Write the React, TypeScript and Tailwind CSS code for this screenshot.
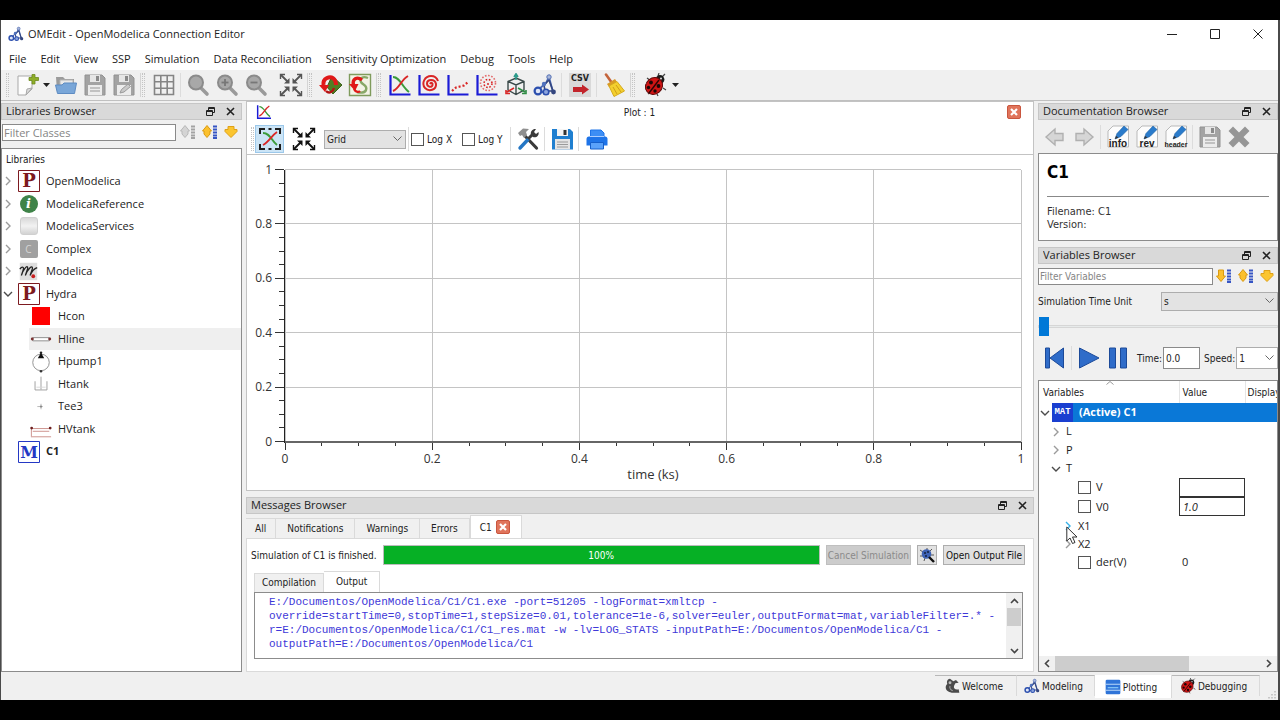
import type { ReactNode } from 'react'

type IconProps = { size?: number }

function Svg({ size = 24, box = 24, children }: { size?: number; box?: number; children: ReactNode }) {
  return (
    <svg width={size} height={size} viewBox={`0 0 ${box} ${box}`} fill="none" className="shrink-0" aria-hidden="true">
      {children}
    </svg>
  )
}

const LogoIcon = ({ size = 24 }: IconProps) => (
  <Svg size={size}>
    <path d="M5 17 L13 10 L16 4 L20 19 M5 19 H13" stroke="#4a69b4" strokeWidth="1.800" />
    <path d="M11 12 L16 7 L20 18 H12 Z" stroke="#34467f" strokeWidth="1.600" />
    <circle cx="16" cy="4" r="2.2" fill="#a9b7da" stroke="#5470b4" />
    <circle cx="5" cy="18" r="3.4" fill="#dfe6f7" stroke="#2c4fae" strokeWidth="2.2" />
    <circle cx="13" cy="19" r="2.800" fill="#8ca4dd" stroke="#2c4fae" strokeWidth="1.6" />
    <circle cx="20.5" cy="19" r="2.4" fill="#34467f" />
    <circle cx="11" cy="11" r="2.2" fill="#4f71bd" />
  </Svg>
)

const NewIcon = () => (
  <Svg>
    <path d="M3 3 H17 V16 L11 22 H3 Z" fill="#fdfdfd" stroke="#a9a9a9" />
    <path d="M11 22 L12 16 L17 15 Z" fill="#dcdcdc" stroke="#a9a9a9" />
    <path d="M14 4.500 H17 V1.500 H20 V4.500 H23.500 V7.500 H20 V11 H17 V7.500 H14 Z" fill="#8fae2b" stroke="#6d8a1d" strokeWidth=".8" />
  </Svg>
)

const OpenIcon = () => (
  <Svg>
    <path d="M2 4 H9 L11 6 H20 V19 H3 Z" fill="#9b9b9b" />
    <path d="M6 7 H19 V12 H6 Z" fill="#e9e9e9" stroke="#b5b5b5" />
    <path d="M1.500 12 H8 L10 10 H22.500 L20.500 20.500 H3.500 Z" fill="#79a6d8" stroke="#5d8bc2" />
  </Svg>
)

const SaveIcon = ({ size = 24 }: IconProps) => (
  <Svg size={size}>
    <path d="M2 2 H19 L22 5 V22 H2 Z" fill="#a3a3a3" stroke="#929292" />
    <path d="M7 2 H17 V9 H7 Z" fill="#e6e6e6" />
    <path d="M13 3 H16 V8 H13 Z" fill="#8a8a8a" />
    <path d="M5 12 H19 V22 H5 Z" fill="#ececec" />
    <path d="M7 15 H17 M7 18 H17" stroke="#b3b3b3" strokeWidth="1.400" />
  </Svg>
)

const SaveAsIcon = () => (
  <Svg>
    <path d="M2 2 H19 L22 5 V22 H2 Z" fill="#a3a3a3" stroke="#929292" />
    <path d="M7 2 H17 V9 H7 Z" fill="#e6e6e6" />
    <path d="M13 3 H16 V8 H13 Z" fill="#8a8a8a" />
    <path d="M5 12 H19 V22 H5 Z" fill="#ececec" />
    <path d="M8 20 L9.500 16.500 L16 11 L18.500 13.500 L12 19 Z" fill="#c9c9c9" stroke="#9a9a9a" />
  </Svg>
)

const GridIcon = () => (
  <Svg>
    <path d="M2.500 2.500 H21.500 V21.500 H2.500 Z M8.800 2.500 V21.500 M15.200 2.500 V21.500 M2.500 8.800 H21.500 M2.500 15.200 H21.500" stroke="#858585" strokeWidth="1.600" />
  </Svg>
)

function ZoomIcon({ sign }: { sign?: 'in' | 'out' }) {
  return (
    <Svg>
      <path d="M15 15 L21 21" stroke="#9a9a9a" strokeWidth="3.600" strokeLinecap="round" />
      <circle cx="10" cy="9.500" r="7" fill="#a8a8a8" stroke="#8b8b8b" strokeWidth="2" />
      {sign && <path d="M6.500 9.500 H13.500" stroke="#777" strokeWidth="1.800" />}
      {sign === 'in' && <path d="M10 6 V13" stroke="#777" strokeWidth="1.800" />}
    </Svg>
  )
}

function FitIcon({ color }: { color: string }) {
  return (
    <Svg>
      <path d="M2 2 L9 9 M22 2 L15 9 M2 22 L9 15 M22 22 L15 15" stroke={color} strokeWidth="1.800" />
      <path d="M10.500 5 V10.500 H5 Z M13.500 5 V10.500 H19 Z M10.500 19 V13.500 H5 Z M13.500 19 V13.500 H19 Z" fill={color} />
      <path d="M1.500 6 V1.500 H6 M18 1.500 H22.500 V6 M1.500 18 V22.500 H6 M18 22.500 H22.500 V18" stroke={color} strokeWidth="1.400" />
    </Svg>
  )
}

const ResimIcon = () => (
  <Svg>
    <path d="M13 3 L23 12 L14 21 L8 14 Z" fill="#4f7d24" stroke="#3a611a" />
    <path d="M17 12 C17 5 12 3 8 5 C5 6.500 4 9 4.500 12" stroke="#e01818" strokeWidth="4" />
    <path d="M0 12 H10 L6 19 Z" fill="#e01818" />
    <path d="M7 18 C10 21 14 19 15 15" stroke="#b31212" strokeWidth="2.400" />
  </Svg>
)

const ResimSetupIcon = () => (
  <Svg>
    <path d="M1.500 1.500 H22.500 V22.500 H1.500 Z" fill="#f3f3e6" stroke="#7f9b5c" strokeWidth="1.400" />
    <path d="M20 5 C15 3 11 5 13 9 C14 12 20 12 18 17 C17 20 12 20 9 19" stroke="#88a867" strokeWidth="2.400" />
    <path d="M14 7 C9 3 4 6 5.500 12" stroke="#e01818" strokeWidth="3.400" />
    <path d="M1 11 H10.500 L7 18 Z" fill="#e01818" />
    <path d="M6 16 C8 20 11 19 12 18" stroke="#e01818" strokeWidth="2.400" />
  </Svg>
)

function Axes({ size, children }: { size?: number; children: ReactNode }) {
  return (
    <Svg size={size}>
      {children}
      <path d="M2.500 2 V21.500 H22.500" stroke="#1b1bd6" strokeWidth="2.200" />
    </Svg>
  )
}

const PlotIcon = ({ size }: IconProps) => (
  <Axes size={size}>
    <path d="M5 4 C12 4 14 14 21 19" stroke="#3c9c3c" strokeWidth="2" />
    <path d="M5 18 C11 16 13 7 20 3" stroke="#d92626" strokeWidth="2" />
  </Axes>
)

const ParametricIcon = () => (
  <Axes>
    <path d="M13 11 C14 9 16 10 15.500 12 C15 15 10 14 10 10.500 C10 6 18 5.500 19 11 C19.500 17 12 19 8 15 C4 10 8 3 14 3 C18 3 20 5 21 8" stroke="#d92626" strokeWidth="2" />
  </Axes>
)

const ArrayPlotIcon = () => (
  <Axes>
    <path d="M6 18 L10 14.500 L14 13.500 L18 12.500 L22 9" stroke="#d92626" strokeWidth="2.200" strokeDasharray="2 2" />
  </Axes>
)

const ArrayParametricIcon = () => (
  <Axes>
    <circle cx="13" cy="10" r="7.500" stroke="#e26a6a" strokeWidth="1.600" strokeDasharray="1.600 1.600" />
    <circle cx="13" cy="10.500" r="4" stroke="#d92626" strokeWidth="1.600" strokeDasharray="1.600 1.600" />
    <circle cx="13" cy="11" r="1" fill="#d92626" />
  </Axes>
)

const CubeIcon = () => (
  <Svg>
    <path d="M12 5 L20 8.500 V17 L12 21.500 L4 17 V8.500 Z M4 8.500 L12 12 L20 8.500 M12 12 V21.500" stroke="#3b4a4a" strokeWidth="1.400" />
    <path d="M12 7 V2 M10 4 L12 .8 L14 4" stroke="#2a9a8a" strokeWidth="1.600" />
    <path d="M10 15 L3 19 M2 17 V20.500 H6" stroke="#d92626" strokeWidth="1.600" />
    <path d="M14 15 L21 19 M22 17 V20.500 H18" stroke="#2f8d45" strokeWidth="1.600" />
  </Svg>
)

const CsvIcon = () => (
  <Svg>
    <path d="M1 0 H23 V24 H1 Z" fill="#d9d9d9" />
    <text x="12" y="8" textAnchor="middle" fontSize="8" fontWeight="700" fontFamily="DejaVu Sans, sans-serif" fill="#222">CSV</text>
    <path d="M5 14 H14 V11.500 L21 16.500 L14 21.500 V19 H5 Z" fill="#c2242b" />
  </Svg>
)

const BroomIcon = () => (
  <Svg>
    <path d="M4 1.500 L10 10" stroke="#c4643b" strokeWidth="2.600" strokeLinecap="round" />
    <path d="M5 11 L13 6 L15 9 L7 14 Z" fill="#d99a25" />
    <path d="M7 13 L15 8.500 L22.500 18 L12 23.500 Z" fill="#f3cf2e" stroke="#d6a91c" />
    <path d="M11 14 L15 21 M14 12 L19 19" stroke="#cf9f17" />
  </Svg>
)

const BugIcon = ({ size }: IconProps) => (
  <Svg size={size}>
    <path d="M4 5 L8 8 M2 12 H5 M5 21 L8 18 M14 21 L15 23 M20 15 L23 17 M19 4 L22 1 M15 3 L16 0" stroke="#444" strokeWidth="1.200" />
    <circle cx="17" cy="6.500" r="4.400" fill="#1b1b1b" />
    <ellipse cx="11" cy="13" rx="9" ry="8" transform="rotate(-40 11 13)" fill="#cf1414" stroke="#5e0808" />
    <path d="M16 7 L6 20" stroke="#2b0505" strokeWidth="1.400" />
    <circle cx="8" cy="9.500" r="1.900" fill="#1b0606" />
    <circle cx="5.500" cy="14.500" r="1.700" fill="#1b0606" />
    <circle cx="15.500" cy="13" r="1.900" fill="#1b0606" />
    <circle cx="12" cy="18" r="1.700" fill="#1b0606" />
    <circle cx="18" cy="5.500" r="1" fill="#ddd" />
  </Svg>
)

const AutoFitIcon = () => (
  <Svg>
    <path d="M5 6 C12 6 13 13 19 18" stroke="#3c9c3c" strokeWidth="1.800" />
    <path d="M5 18 C11 15 13 9 19 5" stroke="#d92626" strokeWidth="1.800" />
    <path d="M2 7 V2 H7 M10.500 2 H13.500 M17 2 H22 V7 M2 17 V22 H7 M10.500 22 H13.500 M17 22 H22 V17" stroke="#1d1d1d" strokeWidth="2" />
  </Svg>
)

const ToolsIcon = () => (
  <Svg>
    <path d="M9 9 L20.500 21" stroke="#3a3a3a" strokeWidth="3.200" strokeLinecap="round" />
    <path d="M2 6 L7 1.500 L13 2 L10 5 L11 8 L8 11 L6 8 L4 9 Z" fill="#8f8f8f" />
    <path d="M4 21 L12 12.500" stroke="#2476c4" strokeWidth="3.400" strokeLinecap="round" />
    <path d="M12 12 L17 7" stroke="#3a3a3a" strokeWidth="3" />
    <path d="M15 8 C14 4 17 1.500 20 2 L18 5 L20 7 L22.500 5 C23.500 9 20 11 17 10 Z" fill="#3a3a3a" />
  </Svg>
)

const FloppyIcon = () => (
  <Svg>
    <path d="M2 2 H20 L23 5 V22.500 H2 Z" fill="#1f7fd0" />
    <path d="M7 2 H18 V9 H7 Z" fill="#f4f4f4" />
    <path d="M13.500 3 H16.500 V8 H13.500 Z" fill="#333" />
    <path d="M5 12 H20 V22.500 H5 Z" fill="#e4e4e4" />
    <path d="M7 15 H18 M7 17.500 H18 M7 20 H18" stroke="#9a9a9a" />
  </Svg>
)

const PrinterIcon = () => (
  <Svg>
    <path d="M5.500 3 H16 L19 6 V10 H5.500 Z" fill="#3c8ef5" stroke="#1e74e8" />
    <path d="M4 9.500 H20 Q22.500 9.500 22.500 12 V18.500 H1.500 V12 Q1.500 9.500 4 9.500 Z" fill="#1e74e8" />
    <path d="M5.500 15.500 H18.500 V22 H5.500 Z" fill="#5aa2fa" stroke="#1560cc" />
    <path d="M5 9.500 H19" stroke="#a9cdff" />
  </Svg>
)

function NavArrow({ back = false }: { back?: boolean }) {
  return (
    <Svg>
      <path
        d={back ? 'M3 12 L12 4 V8.500 H20 V15.500 H12 V20 Z' : 'M21 12 L12 4 V8.500 H4 V15.500 H12 V20 Z'}
        fill="#d6d6d6"
        stroke="#b0b0b0"
        strokeWidth="1.400"
      />
    </Svg>
  )
}

function EditDocIcon({ label }: { label: string }) {
  return (
    <Svg>
      <path d="M7 1 H22.500 V22 H2 V6 Z" fill="#fcfcfc" stroke="#b9b9b9" />
      <path d="M9 14 L11 8.500 L18 1 L22 4.500 L15 11.500 Z" fill="#2a7bcb" stroke="#1a5ea4" strokeWidth=".6" />
      <path d="M9 14 L10 11 L12.500 12.500 Z" fill="#333" />
      <text x="12" y="22" textAnchor="middle" fontSize={label.length > 5 ? 7 : 10} fontWeight="700" fontFamily="Liberation Sans, sans-serif" fill="#222">
        {label}
      </text>
    </Svg>
  )
}

const CrossIcon = () => (
  <Svg>
    <path d="M1.500 6 L6 1.500 L12 7.500 L18 1.500 L22.500 6 L16.500 12 L22.500 18 L18 22.500 L12 16.500 L6 22.500 L1.500 18 L7.500 12 Z" fill="#969696" />
  </Svg>
)

function TreeOrderIcon({ up = false, muted = false }: { up?: boolean; muted?: boolean }) {
  return (
    <Svg size={16} box={16}>
      <path
        d={up ? 'M5 1.500 L9.500 7 H8 V10 L5 13.500 L2 10 V7 H.5 Z' : 'M5 13.500 L9.500 8 H7.500 V2 H2.500 V8 H.5 Z'}
        fill={muted ? '#d4d4d4' : '#fbc02d'}
        stroke={muted ? '#b8b8b8' : '#d99a12'}
      />
      <path d="M11 2.500 H15 M11 5.500 H15 M11 8.500 H15 M11 11.500 H15 M11 14 H15" stroke={muted ? '#a3a3a3' : '#3655c4'} strokeWidth="1.800" />
    </Svg>
  )
}

const DiamondIcon = () => (
  <Svg size={14} box={14}>
    <path d="M4 1.500 H10 V4.500 H13 V6.500 L7 12.500 L1 6.500 V4.500 H4 Z" fill="#fbc52f" stroke="#dfa016" />
  </Svg>
)

function Chevron({ open = false, color = '#9b9b9b' }: { open?: boolean; color?: string }) {
  return (
    <Svg size={10} box={10}>
      <path d={open ? 'M1 3 L5 7 L9 3' : 'M3 1 L7 5 L3 9'} stroke={open ? '#4b4b4b' : color} strokeWidth="1.400" />
    </Svg>
  )
}

const RedCloseIcon = () => (
  <Svg size={14} box={14}>
    <path d="M2 .5 H12 Q13.500 .5 13.500 2 V12 Q13.500 13.500 12 13.500 H2 Q.5 13.500 .5 12 V2 Q.5 .5 2 .5 Z" fill="#e0745b" stroke="#c9563e" />
    <path d="M4 4 L10 10 M10 4 L4 10" stroke="#fff" strokeWidth="2.200" />
  </Svg>
)

const RestartIcon = () => (
  <Svg>
    <path d="M2.500 2 H6.500 V22 H2.500 Z M20.500 2 V22 L7 12 Z" fill="#2f6cc9" stroke="#1c4a99" />
  </Svg>
)

const PlayIcon = () => (
  <Svg>
    <path d="M2.500 2 L22 12 L2.500 22 Z" fill="#2f6cc9" stroke="#1c4a99" />
  </Svg>
)

const PauseIcon = () => (
  <Svg>
    <path d="M3.500 2 H9.500 V22 H3.500 Z M14.500 2 H20.500 V22 H14.500 Z" fill="#2f6cc9" stroke="#1c4a99" />
  </Svg>
)

const WelcomeIcon = () => (
  <Svg size={16}>
    <path d="M9 1 C4 2 4 6 5 9 C1 12 2 19 8 21 C13 23 18 22 23 22 L22 17 C17 18 14 16 15 12 L17 8 L22 7 L18 3 L14 5 Z" fill="#4a4a4a" />
    <circle cx="9" cy="7" r="2.200" fill="#bbb" />
    <path d="M9 12 C8 15 10 18 13 19" stroke="#aaa" strokeWidth="1.600" />
  </Svg>
)

const PlottingIcon = () => (
  <Svg size={16}>
    <path d="M3 1 H21 Q23 1 23 3 V21 Q23 23 21 23 H3 Q1 23 1 21 V3 Q1 1 3 1 Z" fill="#2f74d8" />
    <path d="M1 8 H23 M1 17 H23" stroke="#b9d6f7" strokeWidth="1.600" />
    <path d="M4 13 H20" stroke="#7ec0f5" strokeWidth="2" />
  </Svg>
)

const MENU = ['File', 'Edit', 'View', 'SSP', 'Simulation', 'Data Reconciliation', 'Sensitivity Optimization', 'Debug', 'Tools', 'Help']

function ToolButton({ label, active = false, children }: { label: string; active?: boolean; children: ReactNode }) {
  return (
    <button
      type="button"
      title={label}
      aria-label={label}
      className={`flex h-7 w-[29px] shrink-0 items-center justify-center ${active ? 'border border-[#9cc8ea] bg-[#cbe4f6]' : ''}`}
    >
      {children}
    </button>
  )
}

const Separator = () => <span className="mx-[2px] h-6 w-px shrink-0 bg-[#dcdcdc]" />

const Handle = () => <span className="h-6 w-[3px] shrink-0 border-x border-dotted border-[#c4c4c4]" />

function ToolbarBreak() {
  return (
    <span className="flex w-[11px] shrink-0 justify-between pr-1 pl-[2px]">
      <span className="h-6 w-px bg-[#d4d4d4]" />
      <Handle />
    </span>
  )
}

function MenuCaret() {
  return (
    <button type="button" aria-label="More" className="flex w-[10px] shrink-0 justify-center">
      <svg width="7" height="4" viewBox="0 0 7 4" aria-hidden="true"><path d="M0 0 H7 L3.500 4 Z" fill="#222" /></svg>
    </button>
  )
}

function DockHeader({ title }: { title: string }) {
  return (
    <div className="flex h-[17px] shrink-0 items-center border border-[#c6c6c6] bg-[#d9d9d9] pr-1 pl-1 text-[11px] text-[#222]">
      <h2 className="flex-1 truncate">{title}</h2>
      <button type="button" aria-label={`Float ${title}`} className="mr-[7px] p-[2px]">
        <svg width="9" height="9" viewBox="0 0 9 9" fill="none" stroke="#222" aria-hidden="true">
          <path d="M2.500 3 V.5 H8.500 V5.500 H6.500 M2.500 1.500 H8.500 M.5 3.500 H6.500 V8.500 H.5 Z M.5 4.500 H6.500" />
        </svg>
      </button>
      <button type="button" aria-label={`Close ${title}`} className="p-[2px]">
        <svg width="9" height="9" viewBox="0 0 9 9" fill="none" stroke="#222" strokeWidth="1.600" aria-hidden="true">
          <path d="M1 1 L8 8 M8 1 L1 8" />
        </svg>
      </button>
    </div>
  )
}

function Select({ label, options, className }: { label: string; options: string[]; className: string }) {
  return (
    <span className={`relative flex ${className}`}>
      <select aria-label={label} className="w-full appearance-none border border-[#adadad] bg-inherit pl-[2px] text-[#222]">
        {options.map((option) => (
          <option key={option}>{option}</option>
        ))}
      </select>
      <svg width="9" height="6" viewBox="0 0 9 6" fill="none" stroke="#666" className="pointer-events-none absolute top-1/2 right-1 -translate-y-1/2" aria-hidden="true">
        <path d="M.5 .5 L4.500 4.500 L8.500 .5" />
      </svg>
    </span>
  )
}

function LetterIcon({ letter, color }: { letter: string; color: string }) {
  return (
    <Svg size={22} box={22}>
      <path d="M.5 .5 H21.500 V21.500 H.5 Z" fill="#fff" stroke={color} />
      <text x="11" y="17" textAnchor="middle" fontSize={letter === 'M' ? 16 : 18} fontWeight="700" fontFamily="DejaVu Serif, serif" fill={color}>
        {letter}
      </text>
    </Svg>
  )
}

type Library = { name: string; icon: ReactNode; child?: boolean; expanded?: boolean; leaf?: boolean; hovered?: boolean; bold?: boolean }

const packageIcon = <LetterIcon letter="P" color="#7d1a20" />

const LIBRARIES: Library[] = [
  { name: 'OpenModelica', icon: packageIcon },
  {
    name: 'ModelicaReference',
    icon: <span className="flex size-[18px] items-center justify-center rounded-full bg-[#3f8348] font-['DejaVu_Serif',serif] text-[13px] leading-none font-bold text-white italic">i</span>,
  },
  { name: 'ModelicaServices', icon: <span className="size-[18px] rounded-[3px] border border-[#d0d0d0] bg-linear-to-b from-[#d9d9d9] via-[#f2f2f2] to-[#d3d3d3]" /> },
  {
    name: 'Complex',
    icon: <span className="flex size-[18px] items-center justify-center rounded-[2px] bg-[#a0a0a0] text-[10px] leading-none text-[#d5d5d5]">C</span>,
  },
  {
    name: 'Modelica',
    icon: (
      <Svg size={19}>
        <path d="M1 1 H23 V23 H1 Z" fill="#dedede" />
        <path d="M1 9 C4 5 7 6 5 11 L3 17 C5 10 11 2 11 8 L8 17 C11 9 17 3 17 8 L14 17 C17 10 20 8 23 7" stroke="#222" strokeWidth="1.600" />
        <circle cx="18" cy="18" r="2.400" fill="#c81e1e" />
      </Svg>
    ),
  },
  { name: 'Hydra', icon: packageIcon, expanded: true },
  { name: 'Hcon', icon: <span className="size-[18px] bg-[#ff0000]" />, child: true },
  {
    name: 'Hline',
    icon: (
      <Svg size={22}>
        <path d="M3 10.500 H21 V14 H3 Z" stroke="#888" fill="#fff" />
        <circle cx="2.500" cy="12" r="1.600" fill="#7a3030" />
        <circle cx="21.500" cy="12" r="1.600" fill="#7a3030" />
      </Svg>
    ),
    child: true,
    hovered: true,
  },
  {
    name: 'Hpump1',
    icon: (
      <Svg size={22}>
        <circle cx="12" cy="12.500" r="9" stroke="#8a8a8a" />
        <path d="M12 2 L15.500 8 H8.500 Z" fill="#111" />
        <circle cx="12" cy="2" r="1.400" fill="#222" />
        <circle cx="12" cy="22" r="1.400" fill="#333" />
      </Svg>
    ),
    child: true,
  },
  {
    name: 'Htank',
    icon: (
      <Svg size={22}>
        <path d="M5.500 9 V18.500 H18.500 V9 M12 4 V18" stroke="#9a9a9a" />
        <path d="M7 15.500 H17" stroke="#d8d8d8" />
      </Svg>
    ),
    child: true,
  },
  {
    name: 'Tee3',
    icon: (
      <Svg size={22}>
        <path d="M8 11.500 H14 M12 8.500 V14.500" stroke="#b5b5b5" />
        <circle cx="12" cy="11.500" r="1.200" fill="#888" />
      </Svg>
    ),
    child: true,
  },
  {
    name: 'HVtank',
    icon: (
      <Svg size={22}>
        <path d="M1 11.500 H23 M1 20.500 H23 M1.500 11 V20 M3 14.500 H21" stroke="#c98b86" />
        <circle cx="1.800" cy="11" r="1.500" fill="#6d2020" />
        <circle cx="22" cy="11" r="1.500" fill="#6d2020" />
      </Svg>
    ),
    child: true,
  },
  { name: 'C1', icon: <LetterIcon letter="M" color="#2438c4" />, leaf: true, bold: true },
]

function LibrariesBrowser() {
  return (
    <aside className="flex w-[241px] shrink-0 flex-col pt-[2px]">
      <DockHeader title="Libraries Browser" />
      <div className="flex h-[28px] shrink-0 items-center gap-1 pb-1 pl-px">
        <input
          aria-label="Filter Classes"
          placeholder="Filter Classes"
          className="h-[17px] w-0 flex-1 border border-[#8a8a8a] bg-white px-[1px] text-[11px] placeholder:text-[#858585]"
        />
        <div className="flex items-center gap-[6px] pr-[4px]">
          <button type="button" aria-label="Collapse"><TreeOrderIcon up muted /></button>
          <button type="button" aria-label="Expand"><TreeOrderIcon up /></button>
          <button type="button" aria-label="Scroll to active"><DiamondIcon /></button>
        </div>
      </div>
      <div className="flex-1 border border-[#8c8c8c] bg-white">
        <p className="flex h-[21px] items-center pl-1 font-['DejaVu_Sans_Condensed',sans-serif] text-[10px]">Libraries</p>
        <ul role="tree" aria-label="Libraries" className="grid h-[293px] auto-rows-fr text-[11px]">
          {LIBRARIES.map((lib) => (
            <li
              key={lib.name}
              role="treeitem"
              aria-expanded={lib.child || lib.leaf ? undefined : !!lib.expanded}
              className={`flex items-center ${lib.child ? 'ml-[27px]' : 'pl-[1px]'} ${lib.hovered ? 'bg-[#efefef]' : ''}`}
            >
              {!lib.child && <span className="flex w-[12px] shrink-0">{!lib.leaf && <Chevron open={lib.expanded} />}</span>}
              <span className={`flex shrink-0 items-center justify-center ${lib.child ? 'mr-[5px] w-[24px]' : 'mr-[5px] ml-px w-[25px]'}`}>{lib.icon}</span>
              <span className={lib.bold ? 'font-bold' : ''}>{lib.name}</span>
            </li>
          ))}
        </ul>
      </div>
    </aside>
  )
}

// Plot canvas geometry, in viewBox units
const LEFT = 38
const RIGHT = 774
const TOP = 14
const BOTTOM = 286
const TICKS = ['0', '0.2', '0.4', '0.6', '0.8', '1']

function PlotCanvas() {
  const xAt = (i: number) => LEFT + ((RIGHT - LEFT) * i) / 20
  const yAt = (i: number) => BOTTOM - ((BOTTOM - TOP) * i) / 20
  const steps = Array.from({ length: 21 }, (_, i) => i)

  return (
    <svg viewBox="0 0 786 334" className="min-h-0 w-full flex-1" fontFamily="Open Sans, Noto Sans, sans-serif" fontSize="12" fill="#333" shapeRendering="crispEdges" role="img" aria-label="Plot">
      {steps.filter((i) => i % 4 === 0).map((i) => (
        <g key={i} stroke="#c4c4c4">
          <line x1={xAt(i)} x2={xAt(i)} y1={TOP} y2={BOTTOM} />
          <line x1={LEFT} x2={RIGHT} y1={yAt(i)} y2={yAt(i)} />
        </g>
      ))}
      {steps.map((i) => (
        <g key={i} stroke="#333">
          <line x1={i % 4 ? 32 : 28} x2={LEFT - 1} y1={yAt(i)} y2={yAt(i)} />
          <line x1={xAt(i)} x2={xAt(i)} y1={BOTTOM} y2={BOTTOM + (i % 4 ? 4 : 8)} />
        </g>
      ))}
      <line x1={LEFT - 1} x2={LEFT - 1} y1={TOP} y2={BOTTOM + 1} stroke="#222" />
      <line x1={LEFT} x2={RIGHT} y1={BOTTOM} y2={BOTTOM} stroke="#666" strokeWidth="2" />
      {TICKS.map((tick, i) => (
        <g key={tick}>
          <text x="25" y={yAt(i * 4) + 4} textAnchor="end">{tick}</text>
          <text x={xAt(i * 4)} y="307" textAnchor="middle">{tick}</text>
        </g>
      ))}
      <text x="406" y="323" textAnchor="middle" fontSize="13">time (ks)</text>
    </svg>
  )
}

function PlotWindow() {
  return (
    <section className="flex min-h-0 flex-1 flex-col border border-[#c3c3c3] bg-white">
      <div className="flex h-[20px] shrink-0 items-center pr-3 pl-[9px] font-['DejaVu_Sans_Condensed',sans-serif] text-[10px]">
        <PlotIcon size={16} />
        <h2 className="flex-1 text-center">Plot : 1</h2>
        <button type="button" aria-label="Close plot"><RedCloseIcon /></button>
      </div>
      <div className="flex h-[33px] shrink-0 items-center border-b border-[#c3c3c3] pt-[2px] pl-1 font-['DejaVu_Sans_Condensed',sans-serif] text-[10px]">
        <Handle />
        <span className="ml-px flex gap-[5px]">
          <ToolButton label="Auto fit" active><AutoFitIcon /></ToolButton>
          <ToolButton label="Fit in view"><FitIcon color="#111" /></ToolButton>
        </span>
        <Select label="Grid style" options={['Grid', 'Detailed Grid', 'No Grid']} className="ml-[6px] h-[19px] w-[82px] bg-[#e3e3e3]" />
        <Separator />
        <label className="flex items-center gap-[3px]">
          <input type="checkbox" className="size-[13px] appearance-none border border-[#555] bg-white" />
          Log X
        </label>
        <span className="ml-1"><Separator /></span>
        <label className="ml-[2px] flex items-center gap-[3px]">
          <input type="checkbox" className="size-[13px] appearance-none border border-[#555] bg-white" />
          Log Y
        </label>
        <span className="ml-[6px] flex items-center">
          <Separator />
          <ToolButton label="Setup"><ToolsIcon /></ToolButton>
          <Separator />
          <ToolButton label="Save"><FloppyIcon /></ToolButton>
          <Separator />
          <span className="w-px" />
          <ToolButton label="Print"><PrinterIcon /></ToolButton>
        </span>
      </div>
      <PlotCanvas />
    </section>
  )
}

const MESSAGE_TABS = ['All', 'Notifications', 'Warnings', 'Errors']

const OUTPUT = [
  'E:/Documentos/OpenModelica/C1/C1.exe -port=51205 -logFormat=xmltcp -',
  'override=startTime=0,stopTime=1,stepSize=0.01,tolerance=1e-6,solver=euler,outputFormat=mat,variableFilter=.* -',
  'r=E:/Documentos/OpenModelica/C1/C1_res.mat -w -lv=LOG_STATS -inputPath=E:/Documentos/OpenModelica/C1 -',
  'outputPath=E:/Documentos/OpenModelica/C1',
]

function MessagesBrowser() {
  return (
    <section className="flex h-[175px] shrink-0 flex-col font-['DejaVu_Sans_Condensed',sans-serif] text-[10px]">
      <div className="[font-family:'Open_Sans','Noto_Sans',sans-serif]">
        <DockHeader title="Messages Browser" />
      </div>
      <div role="tablist" className="flex h-[24px] shrink-0 items-end">
        {MESSAGE_TABS.map((tab) => (
          <button key={tab} type="button" role="tab" aria-selected="false" className="h-[20px] border-t border-r border-[#dadada] px-[11px] first:px-[9px]">
            {tab}
          </button>
        ))}
        <div className="flex h-[23px] items-center gap-1 border-x border-t border-[#dadada] bg-white pr-[11px] pl-[9px]">
          <button type="button" role="tab" aria-selected="true">C1</button>
          <button type="button" aria-label="Close C1"><RedCloseIcon /></button>
        </div>
      </div>
      <div className="flex min-h-0 flex-1 flex-col border border-[#dadada] bg-white pt-[6px] pr-[10px] pb-3 pl-[7px]">
        <div className="-mr-[2px] -ml-[3px] flex h-[20px] shrink-0 items-center gap-[6px]">
          <span className="whitespace-nowrap">Simulation of C1 is finished.</span>
          <div role="progressbar" aria-label="Simulation progress" aria-valuenow={100} className="flex h-full flex-1 items-center justify-center border border-[#bcbcbc] bg-[#06b025] text-white">
            100%
          </div>
          <button type="button" disabled className="h-full border border-[#bfbfbf] bg-[#cccccc] px-px text-[#8a8a8a]">Cancel Simulation</button>
          <button type="button" aria-label="Show algorithmic debugger" className="flex h-full w-[20px] items-center justify-center border border-[#adadad] bg-[#e1e1e1]">
            <svg width="16" height="16" viewBox="0 0 16 16" fill="none" aria-hidden="true">
              <path d="M1 3 L4 5 M1 9 H4 M5 14 L6 11 M8 1 V4 M13 2 L11 4 M15 8 H12" stroke="#555" />
              <circle cx="7.500" cy="7" r="4.800" fill="#3e62b5" />
              <circle cx="6" cy="6" r="1" fill="#16223f" />
              <circle cx="9" cy="5" r="1" fill="#16223f" />
              <circle cx="7" cy="9" r="1" fill="#16223f" />
              <path d="M10 10 L15 15" stroke="#111" strokeWidth="2.400" />
            </svg>
          </button>
          <button type="button" className="h-full border border-[#adadad] bg-[#e1e1e1] px-[2px] text-[#111]">Open Output File</button>
        </div>
        <div role="tablist" className="mt-[6px] flex h-[21px] shrink-0 items-end">
          <button type="button" role="tab" aria-selected="false" className="h-[19px] border-x border-t border-[#dadada] bg-[#f0f0f0] px-[7px] pb-[2px]">Compilation</button>
          <button type="button" role="tab" aria-selected="true" className="h-[21px] border-t border-r border-[#dadada] bg-white px-3 pb-px">Output</button>
        </div>
        <div className="flex min-h-0 flex-1 border border-[#8c8c8c] bg-white">
          <div className="min-w-0 flex-1 overflow-hidden pt-[2px] pl-[14px] font-['Liberation_Mono',monospace] text-[11px] leading-[14px] whitespace-pre text-[#4038d8]">
            {OUTPUT.map((line) => (
              <p key={line}>{line}</p>
            ))}
          </div>
          <div className="flex w-[16px] shrink-0 flex-col items-center bg-[#f0f0f0]">
            <button type="button" aria-label="Scroll up" className="flex h-[15px] items-center">
              <svg width="9" height="6" viewBox="0 0 9 6" fill="none" stroke="#444" strokeWidth="1.600" aria-hidden="true"><path d="M1 5 L4.500 1.500 L8 5" /></svg>
            </button>
            <span className="h-[18px] w-[14px] bg-[#cdcdcd]" />
            <button type="button" aria-label="Scroll down" className="mt-auto flex h-[15px] items-center">
              <svg width="9" height="6" viewBox="0 0 9 6" fill="none" stroke="#444" strokeWidth="1.600" aria-hidden="true"><path d="M1 1 L4.500 4.500 L8 1" /></svg>
            </button>
          </div>
        </div>
      </div>
    </section>
  )
}

function DocumentationBrowser() {
  return (
    <section className="flex shrink-0 flex-col">
      <DockHeader title="Documentation Browser" />
      <div className="flex h-[33px] items-center pl-[2px]">
        <ToolButton label="Previous"><NavArrow back /></ToolButton>
        <ToolButton label="Next"><NavArrow /></ToolButton>
        <Separator />
        <ToolButton label="Edit info"><EditDocIcon label="info" /></ToolButton>
        <ToolButton label="Edit revisions"><EditDocIcon label="rev" /></ToolButton>
        <ToolButton label="Edit header"><EditDocIcon label="header" /></ToolButton>
        <Separator />
        <ToolButton label="Save"><SaveIcon /></ToolButton>
        <ToolButton label="Cancel"><CrossIcon /></ToolButton>
      </div>
      <article className="h-[88px] border border-[#8c8c8c] bg-white px-2 pt-2 font-['DejaVu_Sans_Condensed',sans-serif] text-[11px] leading-[13px] text-[#333]">
        <h1 className="text-[17px] leading-[21px] font-bold text-black">C1</h1>
        <hr className="mt-[13px] mb-2 border-[#888]" />
        <p>Filename: C1</p>
        <p>Version:</p>
      </article>
    </section>
  )
}

const VARIABLES: { name: string; level: number; open?: boolean; check?: boolean; value?: string; editable?: boolean; hovered?: boolean }[] = [
  { name: 'L', level: 1 },
  { name: 'P', level: 1 },
  { name: 'T', level: 1, open: true },
  { name: 'V', level: 2, check: true, value: '', editable: true },
  { name: 'V0', level: 2, check: true, value: '1.0', editable: true },
  { name: 'X1', level: 2, hovered: true },
  { name: 'X2', level: 2 },
  { name: 'der(V)', level: 2, check: true, value: '0' },
]

function MousePointer() {
  return (
    <svg width="12" height="19" viewBox="0 0 12 19" className="absolute top-[9px] left-[27px] z-10" aria-hidden="true">
      <path d="M.8 1 V15 L4 12 L6.500 17.500 L9 16.500 L6.500 11 H11 Z" fill="#fff" stroke="#333" />
    </svg>
  )
}

function VariablesTable() {
  return (
    <table className="h-[191px] w-full table-fixed border-collapse text-[11px] text-[#222]">
      <thead className="font-['DejaVu_Sans_Condensed',sans-serif] text-[10px]">
        <tr className="h-[22px]">
          <th className="relative w-[140px] border-r border-[#e5e5e5] p-0 pl-1 text-left font-normal">
            Variables
            <svg width="8" height="4" viewBox="0 0 8 4" fill="none" stroke="#999" className="absolute top-0 left-[67px]" aria-hidden="true"><path d="M.5 3.500 L4 .5 L7.500 3.500" /></svg>
          </th>
          <th className="w-[66px] border-r border-[#e5e5e5] p-0 pl-[3px] text-left font-normal">Value</th>
          <th className="overflow-hidden p-0 pl-[2px] text-left font-normal whitespace-nowrap">Display Unit</th>
        </tr>
      </thead>
      <tbody>
        <tr>
          <td colSpan={3} className="p-0">
            <div className="flex items-center">
              <span className="flex w-[13px] shrink-0 pl-px"><Chevron open /></span>
              <span className="flex h-[19px] flex-1 items-center bg-[#0a78d7] font-bold text-white">
                <span className="mr-[6px] flex h-full w-[21px] items-center justify-center bg-[#1a3fd0] font-['Liberation_Mono',monospace] text-[9px]">MAT</span>
                (Active) C1
              </span>
            </div>
          </td>
        </tr>
        {VARIABLES.map((item) => (
          <tr key={item.name}>
            <td className="p-0">
              <div className={`relative flex h-[18px] items-center ${item.level === 1 ? 'pl-[12px]' : 'pl-[24px]'}`}>
                {item.check ? (
                  <label className="flex items-center gap-[5px] pl-[15px]">
                    <input type="checkbox" className="size-[13px] appearance-none border border-[#555] bg-white" />
                    {item.name}
                  </label>
                ) : (
                  <>
                    <span className="mr-[5px] flex"><Chevron open={item.open} color={item.hovered ? '#35b1e8' : undefined} /></span>
                    {item.name}
                  </>
                )}
                {item.hovered && <MousePointer />}
              </div>
            </td>
            <td className="p-0">
              {item.editable ? (
                <input aria-label={`${item.name} value`} defaultValue={item.value} className="block h-[19px] w-full border border-[#333] bg-white px-[3px] italic" />
              ) : (
                <span className="pl-[3px]">{item.value}</span>
              )}
            </td>
            <td />
          </tr>
        ))}
      </tbody>
    </table>
  )
}

function VariablesBrowser() {
  return (
    <section className="mt-[6px] flex min-h-0 flex-1 flex-col font-['DejaVu_Sans_Condensed',sans-serif] text-[10px]">
      <div className="[font-family:'Open_Sans','Noto_Sans',sans-serif]">
        <DockHeader title="Variables Browser" />
      </div>
      <div className="flex h-[24px] shrink-0 items-center gap-[3px]">
        <input aria-label="Filter Variables" placeholder="Filter Variables" className="h-[17px] w-0 flex-1 border border-[#8a8a8a] bg-white px-[1px] placeholder:text-[#858585]" />
        <div className="flex items-center gap-[6px] pr-1">
          <button type="button" aria-label="Expand all"><TreeOrderIcon /></button>
          <button type="button" aria-label="Collapse all"><TreeOrderIcon up /></button>
          <button type="button" aria-label="Scroll to active"><DiamondIcon /></button>
        </div>
      </div>
      <div className="flex h-[26px] shrink-0 items-center">
        <span className="w-[123px]">Simulation Time Unit</span>
        <Select label="Simulation Time Unit" options={['s', 'ms', 'min', 'h']} className="h-[19px] flex-1 bg-[#e3e3e3]" />
      </div>
      <input
        type="range"
        aria-label="Animation position"
        defaultValue={0}
        className="h-[24px] w-full shrink-0 appearance-none bg-transparent [&::-webkit-slider-runnable-track]:h-[3px] [&::-webkit-slider-runnable-track]:border [&::-webkit-slider-runnable-track]:border-[#d6d6d6] [&::-webkit-slider-runnable-track]:bg-[#e7eaea] [&::-webkit-slider-thumb]:-mt-[9px] [&::-webkit-slider-thumb]:h-[19px] [&::-webkit-slider-thumb]:w-[10px] [&::-webkit-slider-thumb]:appearance-none [&::-webkit-slider-thumb]:bg-[#0078d7]"
      />
      <div className="flex h-[42px] shrink-0 items-center pb-[2px] pl-[2px]">
        <ToolButton label="Restart"><RestartIcon /></ToolButton>
        <Separator />
        <ToolButton label="Play"><PlayIcon /></ToolButton>
        <ToolButton label="Pause"><PauseIcon /></ToolButton>
        <label className="ml-[5px] flex items-center gap-px">
          Time:
          <input defaultValue="0.0" className="h-[22px] w-[37px] border border-[#8a8a8a] bg-white px-[2px]" />
        </label>
        <span className="ml-1 flex flex-1 items-center">
          Speed:
          <Select label="Speed" options={['1', '2', '4', '10']} className="ml-px h-[22px] flex-1 bg-white" />
        </span>
      </div>
      <div className="flex min-h-0 flex-1 flex-col border border-[#8c8c8c] bg-white">
        <div className="min-h-0 flex-1 overflow-hidden [font-family:'Open_Sans','Noto_Sans',sans-serif]">
          <VariablesTable />
        </div>
        <div className="flex h-[15px] shrink-0 items-center bg-[#f0f0f0]">
          <button type="button" aria-label="Scroll left" className="flex w-[16px] justify-center">
            <svg width="6" height="9" viewBox="0 0 6 9" fill="none" stroke="#444" strokeWidth="1.600" aria-hidden="true"><path d="M5 1 L1.500 4.500 L5 8" /></svg>
          </button>
          <span className="flex h-full flex-1"><span className="h-full w-[65%] bg-[#cdcdcd]" /></span>
          <button type="button" aria-label="Scroll right" className="flex w-[16px] justify-center">
            <svg width="6" height="9" viewBox="0 0 6 9" fill="none" stroke="#444" strokeWidth="1.600" aria-hidden="true"><path d="M1 1 L4.500 4.500 L1 8" /></svg>
          </button>
        </div>
      </div>
    </section>
  )
}

const PERSPECTIVES = [
  { name: 'Welcome', icon: <WelcomeIcon />, width: 'w-[82px]' },
  { name: 'Modeling', icon: <LogoIcon size={16} />, width: 'w-[78px]' },
  { name: 'Plotting', icon: <PlottingIcon />, width: 'w-[77px]', active: true },
  { name: 'Debugging', icon: <BugIcon size={16} />, width: 'w-[88px]' },
]

function StatusBar() {
  return (
    <footer className="flex h-[28px] shrink-0 items-start justify-end pt-[3px] font-['DejaVu_Sans_Condensed',sans-serif] text-[10px]">
      {PERSPECTIVES.map((item) => (
        <button
          key={item.name}
          type="button"
          className={`flex items-center justify-center gap-[2px] border-r border-[#dadada] pr-1 ${item.width} ${
            item.active ? 'h-[23px] bg-white pt-px' : 'h-[21px] border-t border-t-[#b8b8b8]'
          }`}
        >
          {item.icon}
          {item.name}
        </button>
      ))}
      <span className="flex h-full w-[18px] items-end justify-end p-px">
        <Svg size={10} box={10}>
          <path d="M8 2 V3.500 M8 5 V6.500 M8 8 V9.500 M5 5 V6.500 M5 8 V9.500 M2 8 V9.500" stroke="#bbb" strokeWidth="1.500" />
        </Svg>
      </span>
    </footer>
  )
}

export default function App() {
  return (
    <div className="h-screen bg-black py-5 [font-family:'Open_Sans','Noto_Sans',sans-serif] text-[11px] text-[#222]">
      <div className="flex h-full flex-col overflow-hidden border-r-2 border-l border-[#4a4a4a] bg-[#f0f0f0]">
        <header className="flex h-[28px] shrink-0 items-center bg-white pl-[7px]">
          <LogoIcon size={16} />
          <h1 className="ml-1 flex-1">OMEdit - OpenModelica Connection Editor</h1>
          <div className="flex gap-[33px] pr-[15px]">
            <button type="button" aria-label="Minimize"><Svg size={10} box={10}><path d="M0 5.500 H10" stroke="#222" /></Svg></button>
            <button type="button" aria-label="Maximize"><Svg size={10} box={10}><path d="M.5 .5 H9.500 V9.500 H.5 Z" stroke="#222" /></Svg></button>
            <button type="button" aria-label="Close"><Svg size={10} box={10}><path d="M.5 .5 L9.500 9.500 M9.500 .5 L.5 9.500" stroke="#222" /></Svg></button>
          </div>
        </header>

        <nav className="flex h-[22px] shrink-0 items-center gap-[14px] bg-white pl-2">
          {MENU.map((item) => (
            <button key={item} type="button">{item}</button>
          ))}
        </nav>

        <div className="flex h-[31px] shrink-0 items-center border-b border-[#c0c0c0] pl-[5px]">
          <Handle />
          <span className="w-[3px]" />
          <ToolButton label="New"><NewIcon /></ToolButton>
          <MenuCaret />
          <ToolButton label="Open"><OpenIcon /></ToolButton>
          <ToolButton label="Save"><SaveIcon /></ToolButton>
          <ToolButton label="Save As"><SaveAsIcon /></ToolButton>
          <ToolbarBreak />
          <ToolButton label="Show grid"><GridIcon /></ToolButton>
          <Separator />
          <ToolButton label="Reset zoom"><ZoomIcon /></ToolButton>
          <ToolButton label="Zoom in"><ZoomIcon sign="in" /></ToolButton>
          <ToolButton label="Zoom out"><ZoomIcon sign="out" /></ToolButton>
          <span className="w-[6px]" />
          <ToolButton label="Fit to view"><FitIcon color="#555" /></ToolButton>
          <ToolbarBreak />
          <ToolButton label="Re-simulate"><ResimIcon /></ToolButton>
          <ToolButton label="Re-simulate setup"><ResimSetupIcon /></ToolButton>
          <ToolbarBreak />
          <ToolButton label="New plot window"><PlotIcon /></ToolButton>
          <ToolButton label="New parametric plot"><ParametricIcon /></ToolButton>
          <ToolButton label="New array plot"><ArrayPlotIcon /></ToolButton>
          <ToolButton label="New array parametric plot"><ArrayParametricIcon /></ToolButton>
          <ToolButton label="New animation"><CubeIcon /></ToolButton>
          <ToolButton label="Diagram window"><LogoIcon /></ToolButton>
          <Separator />
          <span className="w-px" />
          <ToolButton label="Export variables"><CsvIcon /></ToolButton>
          <Separator />
          <ToolButton label="Clear plot"><BroomIcon /></ToolButton>
          <ToolbarBreak />
          <span className="w-px" />
          <ToolButton label="Debug"><BugIcon /></ToolButton>
          <span className="w-px" />
          <MenuCaret />
        </div>

        <main className="flex min-h-0 flex-1 gap-1">
          <LibrariesBrowser />
          <div className="flex min-w-0 flex-1 flex-col gap-[6px]">
            <PlotWindow />
            <MessagesBrowser />
          </div>
          <aside className="flex w-[240px] shrink-0 flex-col pt-[2px]">
            <DocumentationBrowser />
            <VariablesBrowser />
          </aside>
        </main>

        <StatusBar />
      </div>
    </div>
  )
}
